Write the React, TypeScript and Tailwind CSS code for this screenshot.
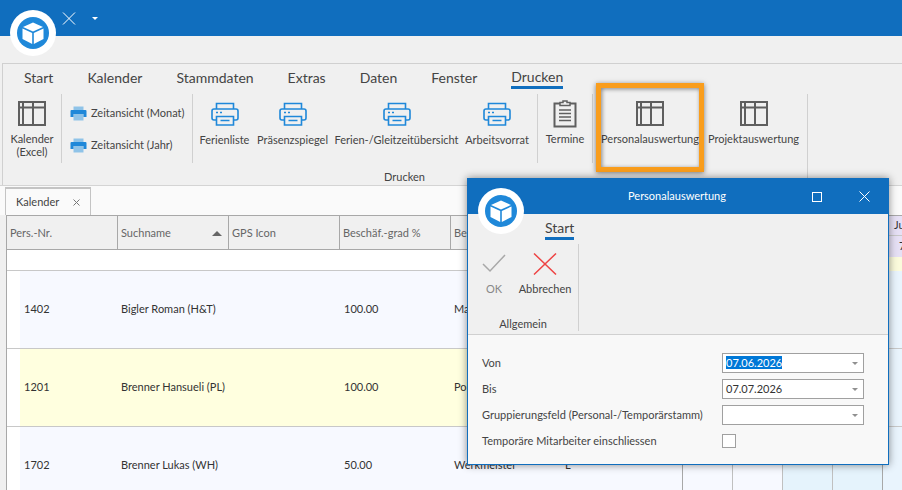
import type { ReactNode } from "react";

function CubeLogo({ className }: { className: string }) {
  return (
    <div className={`absolute flex h-[46px] w-[46px] items-center justify-center rounded-full bg-white ${className}`}>
      <div className="flex h-[32px] w-[32px] items-center justify-center rounded-full bg-[#1f88d9]">
        <svg width="24" height="24" viewBox="0 0 24 24" fill="#fff">
          <path d="M12 1.5 22 6 12 10.5 2 6z" />
          <path d="M1.5 7.5 11.2 12v11L1.5 18z" />
          <path d="M22.5 7.500 12.800 12v11l9.700-5z" />
        </svg>
      </div>
    </div>
  );
}

function TableIcon() {
  return (
    <svg width="28" height="25" viewBox="0 0 28 25" fill="none" stroke="#5f5f5f">
      <rect x="1" y="1" width="26" height="23" strokeWidth="2" />
      <path d="M1 6.500h26M5 1v23M15 1v23" strokeWidth="2" />
    </svg>
  );
}

function PrinterIcon() {
  return (
    <svg width="28" height="24" viewBox="0 0 28 24" fill="none" stroke="#1f88d9" strokeWidth="1.600">
      <path d="M5.500 7V1.500h17V7" />
      <path d="M5.500 18H3a2 2 0 0 1-2-2V9a2 2 0 0 1 2-2h22a2 2 0 0 1 2 2v7a2 2 0 0 1-2 2h-2.500" />
      <path d="M5.500 14.500h17v8.500h-17zM9.500 18.500h9" />
      <path d="M5 10.500h2M9 10.500h2" />
    </svg>
  );
}

function SmallPrinter() {
  return (
    <svg width="17" height="15" viewBox="0 0 17 15">
      <rect x="3.500" y="0.500" width="10" height="4" fill="#8fc3e8" />
      <rect x="3.500" y="4" width="10" height="10.500" fill="#8fc3e8" />
      <path d="M1.500 4h14a1 1 0 0 1 1 1v6h-3V8H3.500v3H.5V5a1 1 0 0 1 1-1z" fill="#1f88d9" />
    </svg>
  );
}

function ClipboardIcon() {
  return (
    <svg width="24" height="28" viewBox="0 0 24 28" fill="none" stroke="#5f5f5f">
      <path d="M7 3.500H1.500v23h21v-23H17" strokeWidth="2" />
      <path d="M7 5.500V2.500h3V1h4v1.500h3v3z" strokeWidth="1.500" />
      <path d="M6 10h12M6 13.500h12M6 17h12M6 20.500h12" strokeWidth="1.500" />
    </svg>
  );
}

function RibbonButton({ width, icon, label }: { width: string; icon: ReactNode; label: ReactNode }) {
  return (
    <div className={`flex shrink-0 flex-col items-center ${width}`}>
      <div className="flex h-[31px] items-start justify-center">{icon}</div>
      <div className="whitespace-nowrap text-center leading-[13px]">{label}</div>
    </div>
  );
}

function Separator({ tall }: { tall?: boolean }) {
  return <div className={`w-px shrink-0 bg-[#d0d0d0] ${tall ? "h-[85px]" : "h-[69px]"}`} />;
}

function GridRow({ bg, no, name, grad, job, extra }: { bg: string; no: string; name: string; grad: string; job: string; extra: string }) {
  return (
    <div className="flex h-[78px] border-b border-[#c8c8c8]">
      <div className="w-[13px] shrink-0 bg-white" />
      <div className={`grid flex-1 grid-cols-[97px_111px_111px_111px_111px_110px] items-center text-[#333] ${bg}`}>
        <div className="pl-[4px]">{no}</div>
        <div className="whitespace-nowrap pl-[4px]">{name}</div>
        <div />
        <div className="pl-[5px]">{grad}</div>
        <div className="whitespace-nowrap pl-[4px]">{job}</div>
        <div className="pl-[4px]">{extra}</div>
      </div>
    </div>
  );
}

function CalendarRow() {
  return (
    <div className="grid h-[78px] grid-cols-[12px_50px_50px_50px_50px_19px] border-b border-[#c8c8c8]">
      <div className="border-r border-[#a8a8a8] bg-[#f7f9ff]" />
      <div className="border-r border-[#c0c0c0] bg-[#f7f9ff]" />
      <div className="border-r border-[#c0c0c0] bg-[#f7f9ff]" />
      <div className="border-r border-[#c0c0c0] bg-[#e5f3fc]" />
      <div className="border-r border-[#a8a8a8] bg-[#e5f3fc]" />
      <div className="bg-[#e9f4fd]" />
    </div>
  );
}

function HeaderCell({ label, sorted }: { label: string; sorted?: boolean }) {
  return (
    <div className="flex h-full w-[111px] shrink-0 items-center justify-between border-r border-[#a8a8a8] pl-[3px] pr-[6px] pt-[1px] text-[#666]">
      <span className="whitespace-nowrap">{label}</span>
      {sorted && <div className="h-0 w-0 border-x-[5px] border-b-[5px] border-x-transparent border-b-[#666]" />}
    </div>
  );
}

function FormRow({ label, children }: { label: string; children: ReactNode }) {
  return (
    <div className="flex h-[26px] items-center pl-[14px]">
      <div className="w-[240px] shrink-0 whitespace-nowrap text-[#444]">{label}</div>
      {children}
    </div>
  );
}

function Combo({ children }: { children?: ReactNode }) {
  return (
    <div className="flex h-[20px] w-[142px] items-center justify-between border border-[#a0a0a0] bg-white pl-[3px] pr-[5px] text-[#333]">
      <div>{children}</div>
      <div className="h-0 w-0 border-x-[3px] border-t-[3px] border-x-transparent border-t-[#909090]" />
    </div>
  );
}

export default function App() {
  const tabs = ["Start", "Kalender", "Stammdaten", "Extras", "Daten", "Fenster"];

  return (
    <div className="relative flex h-[490px] w-[902px] flex-col overflow-hidden bg-[#f0f0f0] font-['Lato',sans-serif] text-[11px] text-[#444]">
      {/* title bar */}
      <div className="flex h-[36px] shrink-0 items-start gap-[16px] bg-[#106ebe] pl-[62px] pt-[12px]">
        <svg width="14" height="13" viewBox="0 0 14 13" stroke="#fff" strokeWidth="1">
          <path d="M1 .5 13 12.500M13 .5 1 12.500" />
        </svg>
        <div className="mt-[5px] h-0 w-0 border-x-[3px] border-t-[3px] border-x-transparent border-t-white" />
      </div>
      <CubeLogo className="left-[10px] top-[10px]" />

      {/* ribbon */}
      <div className="ml-[2px] mt-[27px] flex h-[122px] shrink-0 flex-col border-l border-t border-[#d0d0d0]">
        <div className="flex h-[30px] shrink-0 items-start gap-[34px] pl-[21px] pt-[4px] text-[14px] leading-[19px] text-[#444]">
          {tabs.map((t) => (
            <div key={t}>{t}</div>
          ))}
          <div className="border-b-[3px] border-[#106ebe] leading-[18px]">Drucken</div>
        </div>
        <div className="flex items-start">
          <div className="flex w-[58px] shrink-0 pt-[7px]">
            <RibbonButton
              width="w-[58px]"
              icon={<TableIcon />}
              label={
                <>
                  Kalender
                  <br />
                  (Excel)
                </>
              }
            />
          </div>
          <Separator />
          <div className="flex w-[130px] shrink-0 flex-col gap-[16px] pl-[8px] pt-[11px]">
            <div className="flex h-[16px] items-center gap-[4px]">
              <SmallPrinter />
              <span className="whitespace-nowrap">Zeitansicht (Monat)</span>
            </div>
            <div className="flex h-[16px] items-center gap-[4px]">
              <SmallPrinter />
              <span className="whitespace-nowrap">Zeitansicht (Jahr)</span>
            </div>
          </div>
          <Separator />
          <div className="flex shrink-0 gap-[8px] pl-[7px] pr-[8px] pt-[8px]">
            <RibbonButton width="w-[49px]" icon={<PrinterIcon />} label="Ferienliste" />
            <RibbonButton width="w-[71px]" icon={<PrinterIcon />} label="Präsenzspiegel" />
            <RibbonButton width="w-[121px]" icon={<PrinterIcon />} label="Ferien-/Gleitzeitübersicht" />
            <RibbonButton width="w-[64px]" icon={<PrinterIcon />} label="Arbeitsvorrat" />
          </div>
          <Separator />
          <div className="flex shrink-0 px-[8px] pt-[6px]">
            <RibbonButton width="w-[38px]" icon={<ClipboardIcon />} label={<div className="pt-[1px]">Termine</div>} />
          </div>
          <Separator />
          <div className="flex shrink-0 gap-[9px] px-[8px] pt-[7px]">
            <RibbonButton width="w-[98px]" icon={<TableIcon />} label="Personalauswertung" />
            <RibbonButton width="w-[91px]" icon={<TableIcon />} label="Projektauswertung" />
          </div>
          <Separator tall />
        </div>
        <div className="absolute left-[384px] top-[170px] leading-[14px]">Drucken</div>
      </div>

      {/* document tab strip */}
      <div className="flex h-[30px] shrink-0 items-end border-t border-[#d4d4d4] bg-[#fafafa] pl-[5px]">
        <div className="flex h-[28px] w-[86px] items-center justify-between border-x border-t-2 border-[#c4c4c4] bg-[#fafafa] pl-[10px] pr-[10px] text-[#444]">
          <span>Kalender</span>
          <svg width="7" height="7" viewBox="0 0 7 7" stroke="#777" strokeWidth="1">
            <path d="M.5 .5 6.500 6.500M6.500 .5 .5 6.500" />
          </svg>
        </div>
      </div>

      {/* grid */}
      <div className="ml-[6px] flex flex-1 overflow-hidden border-l border-t border-[#a8a8a8] bg-white">
        <div className="w-[664px] shrink-0">
          <div className="flex h-[34px] border-b border-[#a8a8a8] bg-[#f0f0f0]">
            <HeaderCell label="Pers.-Nr." />
            <HeaderCell label="Suchname" sorted />
            <HeaderCell label="GPS Icon" />
            <HeaderCell label="Beschäf.-grad %" />
            <HeaderCell label="Beruf" />
          </div>
          <div className="h-[21px] border-b border-[#c8c8c8] bg-white" />
          <GridRow bg="bg-[#f7f9ff]" no="1402" name="Bigler Roman (H&T)" grad="100.00" job="Maler" extra="" />
          <GridRow bg="bg-[#ffffdf]" no="1201" name="Brenner Hansueli (PL)" grad="100.00" job="Polier" extra="" />
          <GridRow bg="bg-[#f7f9ff]" no="1702" name="Brenner Lukas (WH)" grad="50.00" job="Werkmeister" extra="L" />
        </div>
        <div className="flex-1">
          <div className="flex h-[55px] justify-end">
            <div className="flex w-[19px] flex-col overflow-hidden">
              <div className="flex h-[20px] items-center border-b border-[#c8c8c8] bg-[#e6e0f5] pl-[11px] text-[#333]">Ju</div>
              <div className="flex h-[21px] items-center bg-[#e6e0f5] pl-[16px] text-[#333]">7</div>
              <div className="h-[14px] bg-[#fbfbdc]" />
            </div>
          </div>
          <CalendarRow />
          <CalendarRow />
          <CalendarRow />
        </div>
      </div>

      {/* highlight round the ribbon button */}
      <div className="absolute left-[596px] top-[83px] h-[89px] w-[108px] border-[5px] border-[#f99d1c] shadow-[0_1px_5px_rgba(0,0,0,0.5),inset_1px_1px_4px_rgba(0,0,0,0.45)]" />

      {/* dialog window */}
      <div className="absolute left-[467px] top-[178px] flex h-[287px] w-[422px] flex-col border border-[#106ebe] bg-[#f8f8f8] shadow-[0_0_8px_rgba(0,0,0,0.45)]">
        <div className="flex h-[35px] shrink-0 items-center bg-[#106ebe] text-white">
          <div className="flex-1 pl-[74px] text-center">Personalauswertung</div>
          <div className="flex items-center gap-[37px] pr-[18px]">
            <div className="h-[10px] w-[10px] border border-white" />
            <svg width="11" height="11" viewBox="0 0 11 11" stroke="#fff" strokeWidth="1">
              <path d="M.5 .5 10.500 10.500M10.500 .5 .5 10.500" />
            </svg>
          </div>
        </div>
        <div className="flex h-[121px] shrink-0 flex-col border-b border-[#d0d0d0] bg-[#f0f0f0]">
          <div className="flex h-[30px] shrink-0 items-start pl-[77px] pt-[5px]">
            <div className="border-b-[3px] border-[#106ebe] text-[14px] leading-[18px] text-[#444]">Start</div>
          </div>
          <div className="flex items-start">
            <div className="flex h-[87px] w-[111px] flex-col border-r border-[#d0d0d0]">
              <div className="flex flex-1 items-start gap-[11px] pl-[13px] pt-[9px]">
                <div className="flex w-[26px] flex-col items-center">
                  <svg width="24" height="20" viewBox="0 0 24 20" fill="none" stroke="#a8a8a8" strokeWidth="1.500">
                    <path d="M1 11l7 7L23 2" />
                  </svg>
                  <div className="mt-[8px] text-[#888]">OK</div>
                </div>
                <div className="flex w-[54px] flex-col items-center">
                  <svg width="24" height="22" viewBox="0 0 24 22" fill="none" stroke="#ee4444" strokeWidth="1.500">
                    <path d="M1 0.500 23 21.500M23 0.500 1 21.500" />
                  </svg>
                  <div className="mt-[6px]">Abbrechen</div>
                </div>
              </div>
              <div className="pt-[3px] text-center leading-[14px]">Allgemein</div>
            </div>
          </div>
        </div>
        <div className="flex flex-col pt-[15px]">
          <FormRow label="Von">
            <Combo>
              <span className="bg-[#0078d7] text-white">07.06.2026</span>
            </Combo>
          </FormRow>
          <FormRow label="Bis">
            <Combo>07.07.2026</Combo>
          </FormRow>
          <FormRow label="Gruppierungsfeld (Personal-/Temporärstamm)">
            <Combo />
          </FormRow>
          <FormRow label="Temporäre Mitarbeiter einschliessen">
            <div className="h-[14px] w-[14px] border border-[#a0a0a0] bg-white" />
          </FormRow>
        </div>
      </div>
      <CubeLogo className="left-[478px] top-[188px]" />
    </div>
  );
}
